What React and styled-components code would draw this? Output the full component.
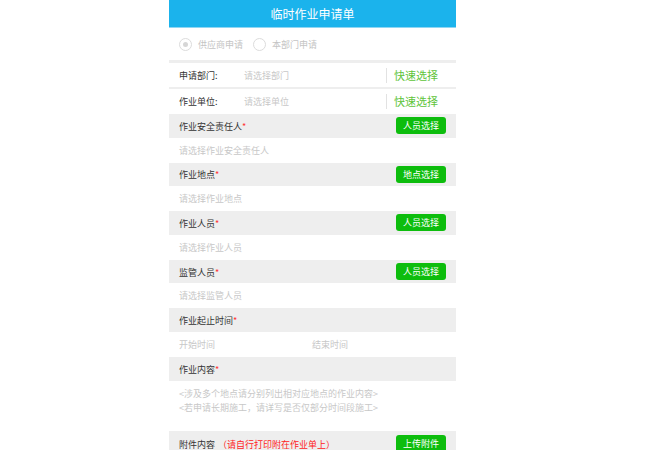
import React from 'react';
import styled, { createGlobalStyle } from 'styled-components';

const GlobalStyle = createGlobalStyle`
  html, body {
    margin: 0;
    padding: 0;
    background: #fff;
    font-family: "Noto Sans CJK SC", "Liberation Sans", sans-serif;
  }
`;

const Page = styled.div`
  width: 287px;
  margin-left: 169px;
  background: #fff;
  overflow: hidden;
  height: 450px;
`;

const Header = styled.div`
  height: 28px;
  line-height: 28px;
  background: #1bb3ec;
  color: #fff;
  font-size: 12px;
  text-align: center;
  border-bottom: 1px solid #8fd6f3;
  box-sizing: border-box;
`;

const RadioRow = styled.div`
  height: 32px;
  display: flex;
  align-items: center;
  padding-left: 10px;
  border-bottom: 3px solid #eee;
`;

const RadioItem = styled.label`
  display: flex;
  align-items: center;
  gap: 6px;
  margin-right: 10px;
  font-size: 9px;
  color: #c4c4c4;
`;

const RadioCircle = styled.span`
  width: 11px;
  height: 11px;
  border: 1px solid #dcdcdc;
  border-radius: 50%;
  display: flex;
  align-items: center;
  justify-content: center;
  &::after {
    content: '';
    width: 5px;
    height: 5px;
    border-radius: 50%;
    background: ${(p) => (p.$checked ? '#d6d6d6' : 'transparent')};
  }
`;

const FieldRow = styled.div`
  height: ${(p) => p.$h}px;
  display: flex;
  align-items: center;
  padding-left: 10px;
  border-bottom: ${(p) => (p.$line ? '2px solid #eee' : 'none')};
  font-size: 9px;
`;

const FieldLabel = styled.span`
  width: 65px;
  color: #333;
`;

const Placeholder = styled.span`
  flex: 1;
  color: #c8c8c8;
  font-size: 9px;
`;

const QuickPick = styled.span`
  border-left: 1px solid #e2e2e2;
  height: 15px;
  line-height: 15px;
  padding-left: 7px;
  width: 62px;
  color: #5ec43a;
  font-size: 11px;
`;

const Band = styled.div`
  height: ${(p) => p.$h || 23.6}px;
  background: #eeeeee;
  display: flex;
  align-items: center;
  justify-content: space-between;
  padding: 1px 10px 0;
  box-sizing: border-box;
`;

const BandLabel = styled.span`
  font-size: 9px;
  color: #333;
`;

const Star = styled.span`
  color: #f33;
`;

const Note = styled.span`
  color: #f22;
  margin-left: 3px;
`;

const PickButton = styled.span`
  height: 17px;
  width: 50px;
  border-radius: 3px;
  background: #0dbd0d;
  color: #fff;
  font-size: 9px;
  line-height: 17px;
  text-align: center;
  margin-top: -1px;
`;

const Body = styled.div`
  height: 25px;
  display: flex;
  align-items: center;
  padding-left: 10px;
`;

const TimeCell = styled.span`
  width: 133px;
  font-size: 9px;
  color: #c8c8c8;
`;

const TextArea = styled.div`
  height: 50px;
  box-sizing: border-box;
  padding: 6px 10px 0;
  font-size: 9px;
  line-height: 14px;
  color: #c8c8c8;
`;

const sections = [
  { label: '作业安全责任人', btn: '人员选择', ph: '请选择作业安全责任人' },
  { label: '作业地点', btn: '地点选择', ph: '请选择作业地点' },
  { label: '作业人员', btn: '人员选择', ph: '请选择作业人员' },
  { label: '监管人员', btn: '人员选择', ph: '请选择监管人员' },
];

const App = () => {
  return (
    <>
      <GlobalStyle />
      <Page>
        <Header>临时作业申请单</Header>
        <RadioRow>
          <RadioItem>
            <RadioCircle $checked />
            供应商申请
          </RadioItem>
          <RadioItem>
            <RadioCircle />
            本部门申请
          </RadioItem>
        </RadioRow>
        <FieldRow $h={24} $line>
          <FieldLabel>申请部门:</FieldLabel>
          <Placeholder>请选择部门</Placeholder>
          <QuickPick>快速选择</QuickPick>
        </FieldRow>
        <FieldRow $h={25}>
          <FieldLabel>作业单位:</FieldLabel>
          <Placeholder>请选择单位</Placeholder>
          <QuickPick>快速选择</QuickPick>
        </FieldRow>

        {sections.map((s) => (
          <React.Fragment key={s.label}>
            <Band>
              <BandLabel>
                {s.label}
                <Star>*</Star>
              </BandLabel>
              <PickButton>{s.btn}</PickButton>
            </Band>
            <Body>
              <Placeholder>{s.ph}</Placeholder>
            </Body>
          </React.Fragment>
        ))}

        <Band>
          <BandLabel>
            作业起止时间<Star>*</Star>
          </BandLabel>
        </Band>
        <Body>
          <TimeCell>开始时间</TimeCell>
          <TimeCell>结束时间</TimeCell>
        </Body>

        <Band>
          <BandLabel>
            作业内容<Star>*</Star>
          </BandLabel>
        </Band>
        <TextArea>
          &lt;涉及多个地点请分别列出相对应地点的作业内容&gt;
          <br />
          &lt;若申请长期施工，请详写是否仅部分时间段施工&gt;
        </TextArea>

        <Band $h={26}>
          <BandLabel>
            附件内容<Note>（请自行打印附在作业单上）</Note>
          </BandLabel>
          <PickButton>上传附件</PickButton>
        </Band>
      </Page>
    </>
  );
};

export default App;
